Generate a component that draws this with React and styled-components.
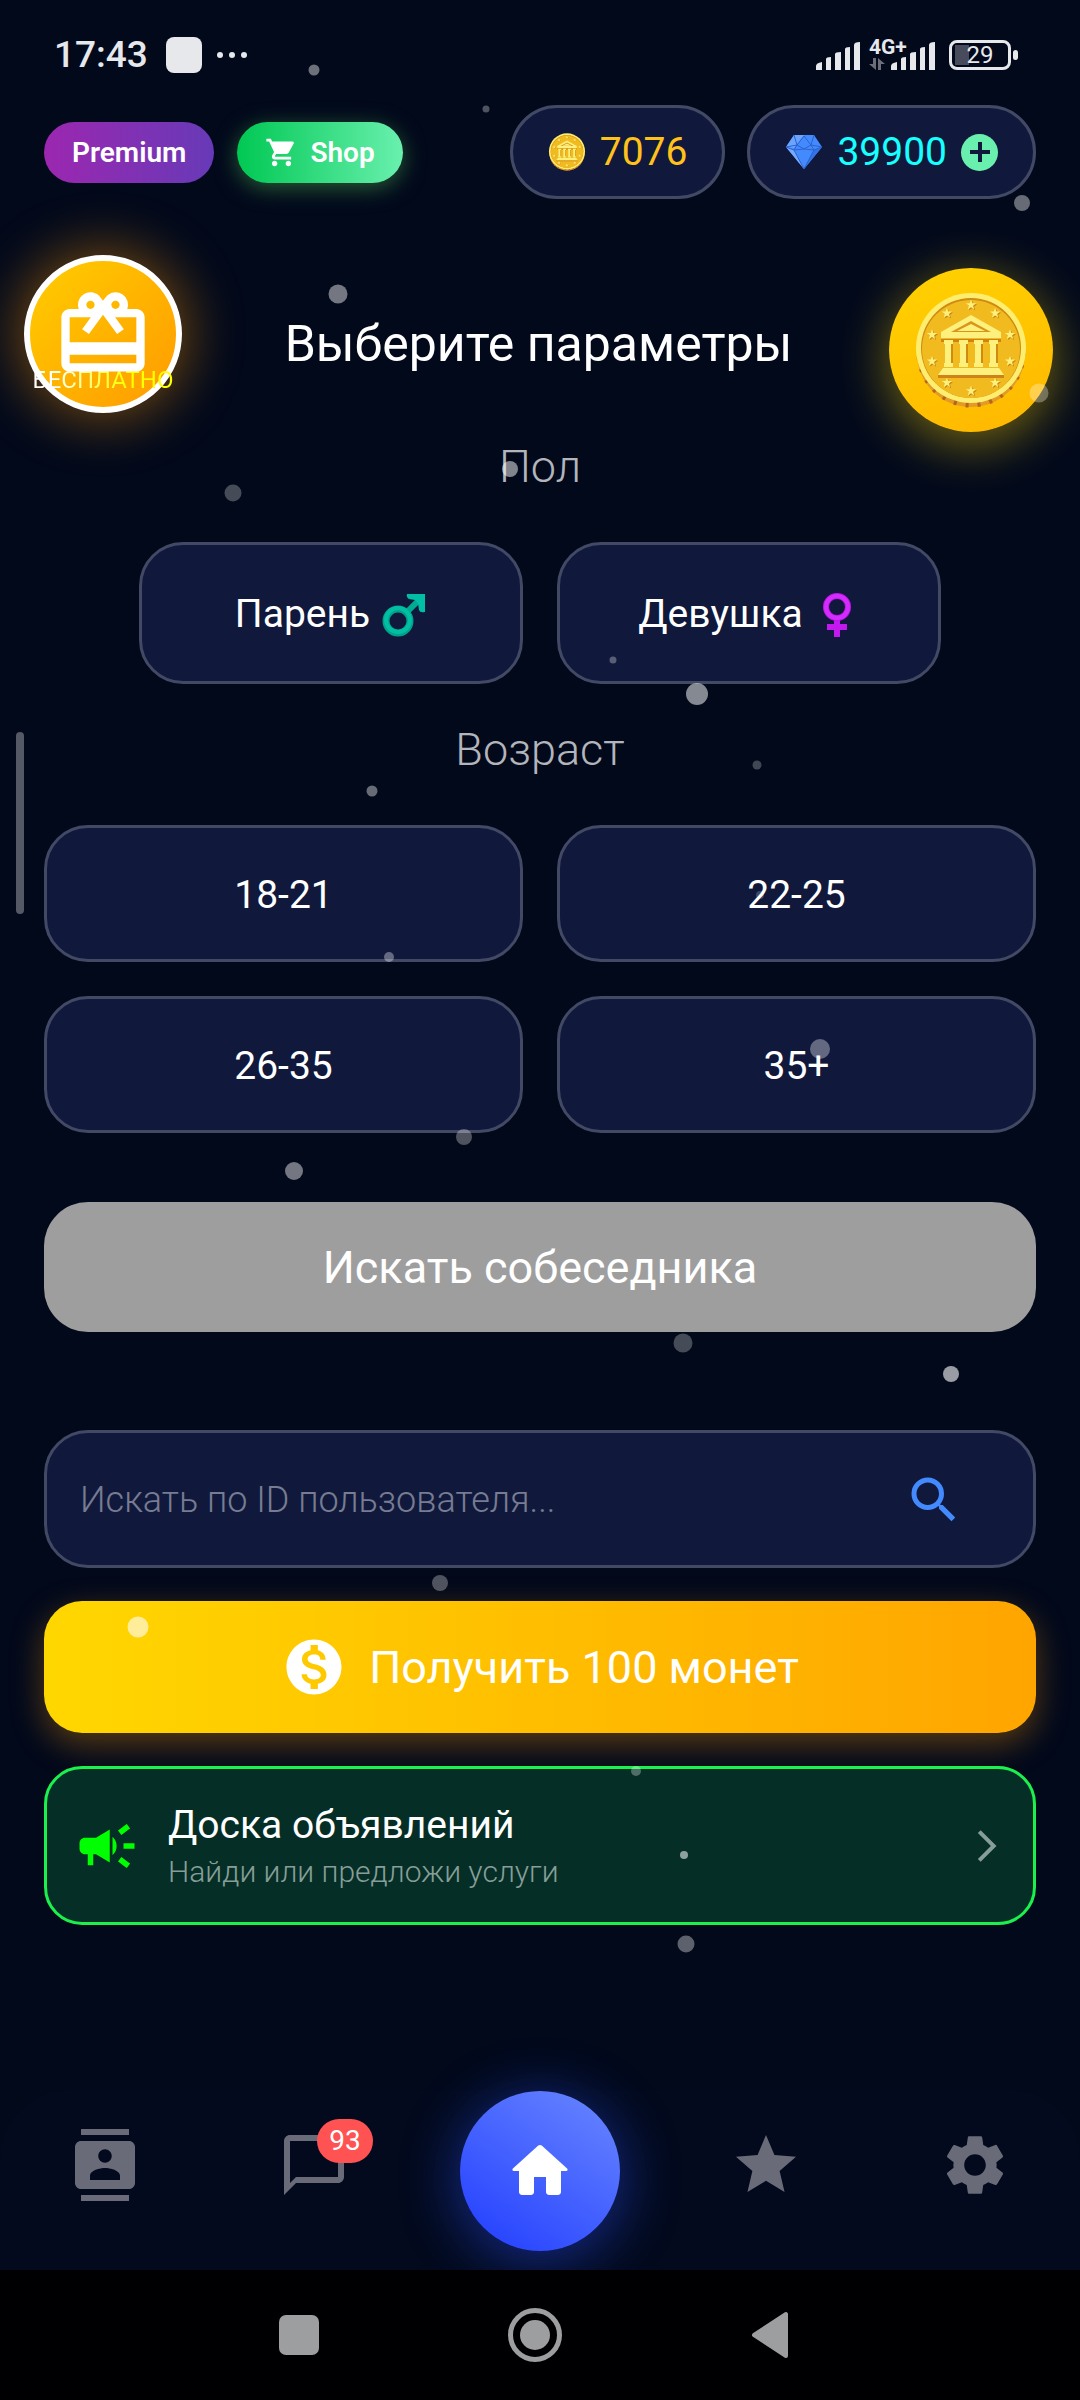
import React, { useState } from "react";
import styled, { createGlobalStyle } from "styled-components";
import {
  MdShoppingCart,
  MdSearch,
  MdMonetizationOn,
  MdCampaign,
  MdArrowForwardIos,
  MdContacts,
  MdChatBubbleOutline,
  MdGrade,
  MdSettings,
  MdOutlineCardGiftcard,
} from "react-icons/md";

// x, y, diameter, opacity
const particles = [
  [314, 70, 11, 0.42],
  [486, 109, 7, 0.3],
  [1022, 203, 16, 0.4],
  [338, 294, 19, 0.45],
  [233, 493, 17, 0.27],
  [510, 469, 16, 0.5],
  [1039, 393, 19, 0.3],
  [613, 660, 7, 0.3],
  [697, 694, 22, 0.52],
  [757, 765, 9, 0.25],
  [372, 791, 11, 0.4],
  [760, 895, 8, 0.2],
  [389, 957, 10, 0.35],
  [820, 1049, 20, 0.35],
  [464, 1137, 16, 0.3],
  [294, 1171, 18, 0.45],
  [683, 1343, 19, 0.27],
  [951, 1374, 16, 0.6],
  [440, 1583, 16, 0.3],
  [138, 1627, 21, 0.6],
  [636, 1771, 10, 0.3],
  [684, 1855, 8, 0.55],
  [686, 1944, 17, 0.36],
];

const ages = ["18-21", "22-25", "26-35", "35+"];

const Signal = () => (
  <svg width="44" height="28" viewBox="0 0 44 28" fill="#e6e8ec">
    <path d="M0 28v-4q0-3 6-4v8z" />
    <path d="M10 28V17q0-2 5-2v13z" />
    <path d="M19 28V12q0-2 6-2v18z" />
    <path d="M29 28V7q0-2 5-2v23z" />
    <path d="M38 28V3q0-3 6-3v28z" />
  </svg>
);

const star = "M0-5.4 1.3-1.7 5.1-1.7 2.1.7 3.2 4.4 0 2.2-3.2 4.4-2.1.7-5.1-1.7-1.3-1.7z";

const Coin = ({ size }) => (
  <svg width={size} height={size} viewBox="0 0 116 116">
    <circle cx="58" cy="61" r="54" fill="#e39a26" />
    <circle cx="58" cy="61" r="52" fill="none" stroke="#b5651d" strokeWidth="5" strokeDasharray="3 9" />
    <circle cx="58" cy="56" r="55" fill="#fdee70" />
    <circle cx="58" cy="56" r="50" fill="#cf8a12" />
    <circle cx="58" cy="57" r="49" fill="#f1bb20" />
    <g transform="translate(58 56)">
      {[0, 36, 72, 108, 144, 180, 216, 252, 288, 324].map((a) => {
        const x = 41 * Math.sin((a * Math.PI) / 180);
        const y = -43 * Math.cos((a * Math.PI) / 180);
        return (
          <g key={a} transform={`translate(${x} ${y})`}>
            <path d={star} fill="#c98412" transform="translate(1 1)" />
            <path d={star} fill="#fdf07c" />
          </g>
        );
      })}
      <path d="M-30-9h60v3h-60zM-33 27h66v3h-66z" fill="#cf8215" />
      <path d="M0-33 30-16v6h-60v-6z" fill="#fdf07c" />
      <path d="M0-27 20-16h-40z" fill="#d9951a" />
      <path d="M0-24 14-17h-28z" fill="#fdf07c" />
      {[-22, -7, 8, 23].map((x) => (
        <g key={x}>
          <path d={`M${x - 5}-8h9v4h-1v19h1v4h-9v-4h1V-4h-1z`} fill="#fdf07c" />
          <path d={`M${x + 2}-4h2v19h-2z`} fill="#cf8a12" />
        </g>
      ))}
      <path d="M-28 20h56l5 7h-66z" fill="#fdf07c" />
    </g>
  </svg>
);

const Diamond = () => (
  <svg width="38" height="38" viewBox="0 0 38 38">
    <path d="M9 2h20l8 12-18 22L1 14z" fill="#448aff" />
    <path d="M9 2h10L9 15 1 14z" fill="#6ba4ff" />
    <path d="M1 14 9 17 19 36z" fill="#77aaff" />
    <path d="M29 17l8-3-18 22z" fill="#3373e8" />
    <path d="M9 2 12 12 19 3 26 12 29 2M1 14l11-2 7 4 7-4 11 2M9 17l3-5M29 17l-3-5M1 14l8 3 10-1 10 1 8-3M9 17l10 19 10-19" fill="none" stroke="#2b62cc" />
  </svg>
);

const Male = () => (
  <svg width="46" height="46" viewBox="0 0 46 46">
    <circle cx="17" cy="30" r="12" fill="none" stroke="#00a389" strokeWidth="7" />
    <path d="M26 21 38 9" stroke="#00ab91" strokeWidth="6" />
    <path d="M26 3h18v18q-5 1-6-2l-1-7-3-3-6-1q-3-2-2-5z" fill="#00bfa5" />
    <circle cx="17" cy="29" r="12" fill="none" stroke="#00bfa5" strokeWidth="4" />
  </svg>
);

const Female = () => (
  <svg width="46" height="46" viewBox="0 0 46 46">
    <path d="M23 27v19M13 36h20" stroke="#c319ee" strokeWidth="6" />
    <circle cx="23" cy="16" r="11" fill="none" stroke="#bf16e8" strokeWidth="6" />
    <circle cx="23" cy="16" r="11" fill="none" stroke="#d42cff" strokeWidth="4" />
  </svg>
);

const App = () => {
  const [gender, setGender] = useState(null);
  const [age, setAge] = useState(null);

  return (
    <Screen>
      <GlobalStyle />
      <StatusBar>
        <StatusGroup>
          <Clock>17:43</Clock>
          <AppSquare />
          <svg width="32" height="8" viewBox="0 0 32 8" fill="#e6e8ec">
            <circle cx="4" cy="4" r="3" />
            <circle cx="16" cy="4" r="3" />
            <circle cx="28" cy="4" r="3" />
          </svg>
        </StatusGroup>
        <StatusGroup>
          <Signals>
            <Signal />
            <Network>
              <span>4G+</span>
              <svg width="16" height="12" viewBox="0 0 16 12" fill="#6b6e79">
                <path d="M4 0h3v12L0 6h4zM9 12V0l7 6h-4v6z" />
              </svg>
            </Network>
            <Signal />
          </Signals>
          <Battery>29</Battery>
        </StatusGroup>
      </StatusBar>

      <Header>
        <HeaderGroup $gap="23px">
          <Chip type="button" $from="#9c27b0" $to="#673ab7">
            Premium
          </Chip>
          <Chip type="button" $from="#00c853" $to="#69f0ae" $glow>
            <MdShoppingCart size={33} />
            Shop
          </Chip>
        </HeaderGroup>
        <HeaderGroup $gap="22px">
          <Balance $color="#ffc11a">
            <Coin size={38} />
            7076
          </Balance>
          <Balance $color="#18ffff">
            <Diamond />
            39900
            <AddButton type="button" aria-label="Пополнить">
              <svg width="20" height="20" viewBox="0 0 20 20">
                <path d="M10 0v20M0 10h20" stroke="#10193c" strokeWidth="4" />
              </svg>
            </AddButton>
          </Balance>
        </HeaderGroup>
      </Header>

      <Hero>
        <GiftButton type="button">
          <FreeText>БЕСПЛАТНО</FreeText>
          <MdOutlineCardGiftcard size={100} />
        </GiftButton>
        <Title>Выберите параметры</Title>
        <CoinButton type="button" aria-label="Монеты">
          <Coin size={116} />
        </CoinButton>
      </Hero>

      <Main>
        <SectionLabel $top="9px">Пол</SectionLabel>
        <GenderRow>
          <Option type="button" $tall aria-pressed={gender === "m"} onClick={() => setGender("m")}>
            Парень <Male />
          </Option>
          <Option type="button" $tall aria-pressed={gender === "f"} onClick={() => setGender("f")}>
            Девушка <Female />
          </Option>
        </GenderRow>

        <SectionLabel $top="40px">Возраст</SectionLabel>
        <AgeGrid>
          {ages.map((a) => (
            <Option key={a} type="button" aria-pressed={age === a} onClick={() => setAge(a)}>
              {a}
            </Option>
          ))}
        </AgeGrid>

        <FindButton type="button">Искать собеседника</FindButton>

        <SearchBox onSubmit={(e) => e.preventDefault()}>
          <SearchInput type="text" aria-label="Искать по ID пользователя" placeholder="Искать по ID пользователя..." />
          <SearchButton type="submit" aria-label="Найти">
            <MdSearch size={60} />
          </SearchButton>
        </SearchBox>

        <CoinsButton type="button">
          <MdMonetizationOn size={66} />
          Получить 100 монет
        </CoinsButton>

        <Board href="#board">
          <MdCampaign size={66} color="#00ff00" />
          <BoardText>
            <BoardTitle>Доска объявлений</BoardTitle>
            <BoardHint>Найди или предложи услуги</BoardHint>
          </BoardText>
          <MdArrowForwardIos size={38} color="#879e98" />
        </Board>
      </Main>

      <BottomNav>
        <NavItem href="#contacts" aria-label="Контакты">
          <MdContacts size={72} />
        </NavItem>
        <NavItem href="#chats" aria-label="Чаты">
          <MdChatBubbleOutline size={72} />
          <Badge>93</Badge>
        </NavItem>
        <HomeButton href="#home" aria-label="Главная">
          <svg width="72" height="72" viewBox="0 0 24 24" fill="#fff">
            <path d="M10 19v-5h4v5c0 .55.45 1 1 1h3c.55 0 1-.45 1-1v-7h1.7c.46 0 .68-.57.33-.87L12.67 3.6c-.38-.34-.96-.34-1.34 0l-8.36 7.53c-.34.3-.13.87.33.87H5v7c0 .55.45 1 1 1h3c.55 0 1-.45 1-1z" />
          </svg>
        </HomeButton>
        <NavItem href="#favorites" aria-label="Избранное">
          <MdGrade size={72} />
        </NavItem>
        <NavItem href="#settings" aria-label="Настройки">
          <MdSettings size={72} />
        </NavItem>
      </BottomNav>

      <SystemBar>
        <SystemButton type="button" aria-label="Недавние">
          <svg width="54" height="54" viewBox="0 0 54 54">
            <rect x="7" y="7" width="40" height="40" rx="7" fill="#9d9ea0" />
          </svg>
        </SystemButton>
        <SystemButton type="button" aria-label="Домой">
          <svg width="54" height="54" viewBox="0 0 54 54">
            <circle cx="27" cy="27" r="24.5" fill="none" stroke="#9d9ea0" strokeWidth="5" />
            <circle cx="27" cy="27" r="15" fill="#9d9ea0" />
          </svg>
        </SystemButton>
        <SystemButton type="button" aria-label="Назад">
          <svg width="54" height="54" viewBox="0 0 54 54">
            <path d="M10 27 42 6v42z" fill="#9d9ea0" stroke="#9d9ea0" strokeWidth="4" strokeLinejoin="round" />
          </svg>
        </SystemButton>
      </SystemBar>

      <EdgeHandle />
      {particles.map(([x, y, d, o]) => (
        <Particle key={`${x}-${y}`} $x={x} $y={y} $d={d} $o={o} />
      ))}
    </Screen>
  );
};

const GlobalStyle = createGlobalStyle`
  * {
    box-sizing: border-box;
  }
  body {
    margin: 0;
    background: #02081b;
    color: #fff;
    font-family: Roboto, "Noto Sans", sans-serif;
  }
  button, input {
    font: inherit;
    color: inherit;
    border: 0;
    padding: 0;
    background: none;
  }
  button {
    cursor: pointer;
  }
  a {
    color: inherit;
    text-decoration: none;
  }
  svg {
    display: block;
    flex: none;
  }
`;

const Screen = styled.div`
  position: relative;
  min-height: 100vh;
  display: flex;
  flex-direction: column;
  overflow: hidden;
  background: #02091b;
`;

const StatusBar = styled.div`
  display: flex;
  justify-content: space-between;
  align-items: center;
  height: 105px;
  padding: 4px 62px 0 54px;
`;

const StatusGroup = styled.div`
  display: flex;
  align-items: center;
  gap: 14px;
`;

const Clock = styled.span`
  font-size: 37px;
  font-weight: 500;
  color: #e6e8ec;
`;

const AppSquare = styled.span`
  width: 36px;
  height: 36px;
  margin-left: 4px;
  border-radius: 8px;
  background: #e6e8ec;
`;

const Signals = styled.div`
  display: flex;
  align-items: flex-end;
`;

const Network = styled.div`
  display: flex;
  flex-direction: column;
  gap: 3px;
  width: 31px;
  padding-left: 9px;
  font-size: 21px;
  line-height: 16px;
  font-weight: 700;
  color: #e6e8ec;
`;

const Battery = styled.div`
  position: relative;
  display: flex;
  align-items: center;
  justify-content: center;
  width: 62px;
  height: 30px;
  margin-right: 7px;
  border: 3px solid #e6e8ec;
  border-radius: 8px;
  background: linear-gradient(#474b5c, #474b5c) 3px 2px / 14px 20px no-repeat;
  font-size: 24px;
  line-height: 24px;
  color: #e6e8ec;

  &::after {
    content: "";
    position: absolute;
    right: -10px;
    top: 7px;
    width: 5px;
    height: 10px;
    border-radius: 3px;
    background: #e6e8ec;
  }
`;

const Header = styled.header`
  display: flex;
  justify-content: space-between;
  align-items: center;
  padding: 0 44px;
`;

const HeaderGroup = styled.div`
  display: flex;
  align-items: center;
  gap: ${(p) => p.$gap};
`;

const Chip = styled.button`
  display: flex;
  align-items: center;
  gap: 12px;
  height: 61px;
  padding: 0 28px;
  border-radius: 31px;
  background: linear-gradient(90deg, ${(p) => p.$from}, ${(p) => p.$to});
  box-shadow: ${(p) => (p.$glow ? "0 5px 22px rgba(76, 175, 80, 0.5)" : "none")};
  font-size: 28px;
  font-weight: 600;
`;

const Balance = styled.div`
  display: flex;
  align-items: center;
  gap: 14px;
  height: 94px;
  padding: 0 35px;
  border: 3px solid #424965;
  border-radius: 47px;
  background: #10193c;
  font-size: 39px;
  color: ${(p) => p.$color};
`;

const AddButton = styled.button`
  display: flex;
  align-items: center;
  justify-content: center;
  width: 37px;
  height: 37px;
  border-radius: 50%;
  background: #69f0ae;
`;

const Hero = styled.div`
  display: grid;
  grid-template-columns: 1fr auto 1fr;
  align-items: center;
  height: 177px;
  margin-top: 56px;
  padding: 0 27px 0 24px;
`;

const GiftButton = styled.button`
  position: relative;
  display: flex;
  align-items: center;
  justify-content: center;
  align-self: start;
  width: 158px;
  height: 158px;
  border: 6px solid #fff;
  border-radius: 50%;
  background: linear-gradient(135deg, #ffcf00, #ff9800);
  background-origin: border-box;
  box-shadow: 0 0 55px 6px rgba(255, 152, 0, 0.45);

  svg {
    position: relative;
  }
`;

const FreeText = styled.span`
  position: absolute;
  left: 50%;
  bottom: 13px;
  transform: translateX(-50%);
  font-size: 24px;
  line-height: 28px;
  color: transparent;
  background: linear-gradient(90deg, #fff 15%, #ffff00 65%);
  background-clip: text;
`;

const Title = styled.h1`
  margin: 0;
  font-size: 50px;
  line-height: 60px;
  font-weight: 400;
`;

const CoinButton = styled.button`
  display: flex;
  align-items: center;
  justify-content: center;
  align-self: end;
  justify-self: end;
  width: 164px;
  height: 164px;
  border-radius: 50%;
  background: linear-gradient(160deg, #ffd200, #ffb700);
  box-shadow: 0 11px 50px 2px rgba(255, 215, 0, 0.45);
`;

const Main = styled.main`
  flex: 1;
  display: flex;
  flex-direction: column;
  padding: 0 44px;
`;

const SectionLabel = styled.h2`
  margin: ${(p) => p.$top} 0 49px;
  font-size: 45px;
  line-height: 52px;
  font-weight: 300;
  text-align: center;
  color: #b3b5bb;
`;

const GenderRow = styled.div`
  display: grid;
  grid-template-columns: 1fr 1fr;
  gap: 34px;
  padding: 0 95px;
`;

const AgeGrid = styled.div`
  display: grid;
  grid-template-columns: 1fr 1fr;
  gap: 34px;
`;

const Option = styled.button`
  display: flex;
  align-items: center;
  justify-content: center;
  gap: 11px;
  height: ${(p) => (p.$tall ? "142px" : "137px")};
  padding-top: 2px;
  border: 3px solid #424965;
  border-radius: 44px;
  background: #10193c;
  font-size: 39px;
`;

const FindButton = styled.button`
  height: 130px;
  margin-top: 69px;
  border-radius: 44px;
  background: #9e9e9e;
  font-size: 45px;
`;

const SearchBox = styled.form`
  display: flex;
  align-items: center;
  height: 138px;
  margin-top: 98px;
  padding: 2px 69px 0 33px;
  border: 3px solid #424965;
  border-radius: 44px;
  background: #10193c;
`;

const SearchInput = styled.input`
  flex: 1;
  min-width: 0;
  font-size: 36px;
  line-height: 44px;
  font-weight: 300;
  outline: none;

  &::placeholder {
    color: #777c92;
    opacity: 1;
  }
`;

const SearchButton = styled.button`
  color: #448aff;
`;

const CoinsButton = styled.button`
  display: flex;
  align-items: center;
  justify-content: center;
  gap: 22px;
  height: 132px;
  margin-top: 33px;
  border-radius: 38px;
  background: linear-gradient(90deg, #ffd700, #ffa500);
  box-shadow: 0 11px 33px rgba(255, 152, 0, 0.35);
  font-size: 45px;
`;

const Board = styled.a`
  display: flex;
  align-items: center;
  height: 159px;
  margin-top: 33px;
  padding: 0 27px;
  border: 3px solid #1bf04c;
  border-radius: 38px;
  background: #052e26;
`;

const BoardText = styled.div`
  flex: 1;
  display: flex;
  flex-direction: column;
  gap: 5px;
  padding-left: 28px;
`;

const BoardTitle = styled.span`
  font-size: 39px;
  line-height: 48px;
`;

const BoardHint = styled.span`
  font-size: 30px;
  line-height: 36px;
  font-weight: 300;
  color: #879e98;
`;

const BottomNav = styled.nav`
  display: flex;
  justify-content: space-around;
  align-items: flex-start;
  height: 180px;
  padding-top: 1px;
  border-radius: 69px 69px 0 0;
  background: #030a1d;
`;

const NavItem = styled.a`
  position: relative;
  display: flex;
  align-items: center;
  justify-content: center;
  width: 126px;
  height: 148px;
  color: #696b78;
`;

const Badge = styled.span`
  position: absolute;
  top: 28px;
  right: 4px;
  padding: 0 12px;
  border-radius: 22px;
  background: #ff5252;
  color: #fff;
  font-size: 28px;
  line-height: 44px;
`;

const HomeButton = styled.a`
  display: flex;
  align-items: center;
  justify-content: center;
  width: 160px;
  height: 160px;
  border-radius: 50%;
  background: linear-gradient(215deg, #6a88ff, #203cff);
  box-shadow: 0 8px 55px 4px rgba(41, 80, 255, 0.45);
`;

const SystemBar = styled.div`
  position: relative;
  display: flex;
  justify-content: center;
  align-items: center;
  gap: 182px;
  height: 130px;
  padding-right: 10px;
  background: #000003;
`;

const SystemButton = styled.button`
  display: flex;
`;

const EdgeHandle = styled.div`
  position: absolute;
  left: 16px;
  top: 732px;
  width: 8px;
  height: 182px;
  border-radius: 4px;
  background: #555966;
`;

const Particle = styled.span`
  position: absolute;
  left: ${(p) => p.$x}px;
  top: ${(p) => p.$y}px;
  width: ${(p) => p.$d}px;
  height: ${(p) => p.$d}px;
  border-radius: 50%;
  transform: translate(-50%, -50%);
  background: #fff;
  opacity: ${(p) => p.$o};
  pointer-events: none;
`;

export default App;
